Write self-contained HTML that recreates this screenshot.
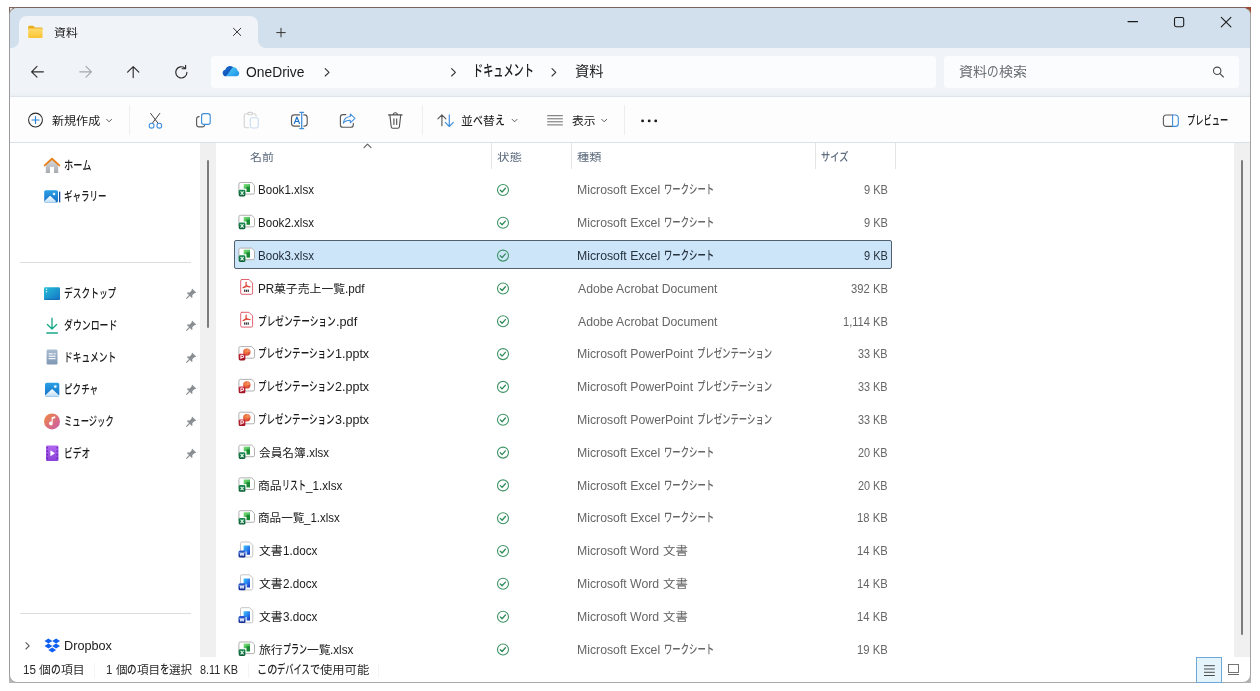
<!DOCTYPE html>
<html lang="ja"><head><meta charset="utf-8"><title>資料</title>
<style>
html,body{margin:0;padding:0;}
body{width:1260px;height:691px;position:relative;overflow:hidden;background:#fff;font-family:"Liberation Sans","Noto Sans CJK JP",sans-serif;}
.t{position:absolute;white-space:pre;will-change:transform;}
.r{display:inline-block;white-space:pre;vertical-align:top;}
.s{display:inline-block;white-space:pre;transform-origin:0 50%;}
.a{position:absolute;}
svg{position:absolute;overflow:visible;}

</style></head><body>
<div class="a" style="left:9px;top:7px;width:9px;height:9px;box-sizing:border-box;background:#efe6e3;border-left:1px solid #7f655e;border-top:1px solid #7f655e;"></div>
<div class="a" style="left:1242px;top:7px;width:9px;height:9px;background:#a24a30;"></div>
<div class="a" style="left:9px;top:674px;width:9px;height:9px;background:#b8b8b8;"></div>
<div class="a" style="left:1242px;top:674px;width:9px;height:9px;background:#b4b4b4;"></div>
<div class="a" style="left:9px;top:7px;width:1242px;height:676px;box-sizing:border-box;border:1px solid #8d8a8a;border-top-color:#7d635c;border-left-color:#9c9a9a;border-right-color:#a3a3a3;border-bottom-color:#a9a9a9;border-radius:8px;background:#ffffff;overflow:hidden;">
  <div class="a" style="left:0;top:0;width:1240px;height:40px;background:#d1e0ec;"></div>
  <div class="a" style="left:0;top:40px;width:1240px;height:48px;background:linear-gradient(#f0f4f9 0,#f0f4f9 44px,#e9eef4 48px);"></div>
  <div class="a" style="left:0;top:88px;width:1240px;height:1px;background:#dfe5eb;"></div>
  <div class="a" style="left:0;top:89px;width:1240px;height:45px;background:#fdfdfe;"></div>
  <div class="a" style="left:0;top:134px;width:1240px;height:1px;background:#d9e0e8;"></div>
</div>
<!-- tab -->
<div class="a" style="left:19px;top:16px;width:239px;height:32px;background:#f0f4f9;border-radius:8px 8px 0 0;"></div>
<div class="a" style="left:11px;top:40px;width:8px;height:8px;background:radial-gradient(circle at 0 0, #d1e0ec 0, #d1e0ec 7.5px, #f0f4f9 8.5px);"></div>
<div class="a" style="left:258px;top:40px;width:8px;height:8px;background:radial-gradient(circle at 100% 0, #d1e0ec 0, #d1e0ec 7.5px, #f0f4f9 8.5px);"></div>
<!-- address + search boxes -->
<div class="a" style="left:211px;top:56px;width:725px;height:32px;background:#fafcfd;border-radius:4px;"></div>
<div class="a" style="left:944px;top:56px;width:295px;height:32px;background:#fafcfd;border-radius:4px;"></div>
<!-- toolbar separators -->
<div class="a" style="left:129px;top:105px;width:1px;height:30px;background:#eceef0;"></div>
<div class="a" style="left:422px;top:105px;width:1px;height:30px;background:#eceef0;"></div>
<div class="a" style="left:624px;top:105px;width:1px;height:30px;background:#eceef0;"></div>
<!-- sidebar splitter band + scrollbars -->
<div class="a" style="left:200px;top:143px;width:16px;height:514px;background:#f0f0f0;"></div>
<div class="a" style="left:206.8px;top:159.5px;width:2.6px;height:168px;background:#7c7c7c;border-radius:1.3px;"></div>
<div class="a" style="left:1234px;top:143px;width:16px;height:514px;background:#f0f0f0;"></div>
<div class="a" style="left:1240.5px;top:159.5px;width:2.6px;height:475px;background:#7c7c7c;border-radius:1.3px;"></div>
<!-- sidebar separators -->
<div class="a" style="left:20px;top:262px;width:171px;height:1px;background:#dedede;"></div>
<div class="a" style="left:20px;top:613px;width:171px;height:1px;background:#dedede;"></div>
<!-- column header separators -->
<div class="a" style="left:491px;top:143px;width:1px;height:25.500px;background:#e4e4e6;"></div>
<div class="a" style="left:571px;top:143px;width:1px;height:25.500px;background:#e4e4e6;"></div>
<div class="a" style="left:815px;top:143px;width:1px;height:25.500px;background:#e4e4e6;"></div>
<div class="a" style="left:895px;top:143px;width:1px;height:25.500px;background:#e4e4e6;"></div>
<!-- selected row -->
<div class="a" style="left:234px;top:240px;width:657.800px;height:28.900px;box-sizing:border-box;background:#cde5f9;border:1.400px solid #53616f;border-radius:2px;"></div>
<!-- status bar separators -->
<div class="a" style="left:94px;top:663px;width:1px;height:15px;background:#f4f4f4;"></div>
<div class="a" style="left:248px;top:663px;width:1px;height:15px;background:#f4f4f4;"></div>
<div class="a" style="left:378px;top:663px;width:1px;height:15px;background:#f4f4f4;"></div>
<!-- view buttons -->
<div class="a" style="left:1196px;top:657px;width:25.500px;height:25.500px;box-sizing:border-box;background:#e5f3fb;border:1.2px solid #6ea8d8;"></div>

<svg width="1260" height="691" viewBox="0 0 1260 691" style="left:0;top:0" fill="none" stroke-linecap="round" stroke-linejoin="round">
<defs>
<linearGradient id="gFold" x1="0" y1="0" x2="0" y2="1"><stop offset="0" stop-color="#ffdc6e"/><stop offset="1" stop-color="#f9c433"/></linearGradient>
<linearGradient id="gCloudL" x1="0" y1="0" x2="1" y2="1"><stop offset="0" stop-color="#1c74d8"/><stop offset="1" stop-color="#0b3fa6"/></linearGradient>
<linearGradient id="gCloudR" x1="0" y1="0" x2="1" y2="1"><stop offset="0" stop-color="#4fd0f7"/><stop offset="1" stop-color="#1e8fe6"/></linearGradient>
</defs>
<!-- tab folder -->
<g id="i-folder">
<path d="M28.2 27.2a1.4 1.4 0 0 1 1.4-1.4h3.6l1.6 1.7h6.4a1.4 1.4 0 0 1 1.4 1.4v1h-14.4z" fill="#e9ac1c"/>
<rect x="28.2" y="28.4" width="14.4" height="9.5" rx="1.2" fill="url(#gFold)"/>
</g>
<!-- tab close, plus -->
<g stroke="#333" stroke-width="1" stroke-linecap="butt">
<path d="M233.200 28l7.800 7.800M241 28l-7.800 7.800"/>
<path d="M276.300 32.600h9.400M281 27.900v9.400"/>
</g>
<!-- window controls -->
<g stroke="#1b1b1b" stroke-width="1.1">
<path d="M1128 21.6h9.6"/>
<rect x="1174.5" y="17.5" width="9.2" height="9.2" rx="1.6"/>
<path d="M1221.3 17.3l9.6 9.6M1230.9 17.3l-9.6 9.6"/>
</g>
<!-- nav arrows -->
<g stroke="#2b2b2b" stroke-width="1.15">
<path d="M43.4 71.8H31.8M37 66.4l-5.4 5.4 5.4 5.4"/>
<path d="M133.2 77.6V66.8M127.6 72.2l5.6-5.6 5.6 5.6"/>
<path d="M186.9 72.4a5.6 5.6 0 1 1-2-4.3M185.6 65.2v3.6h-3.6"/>
</g>
<g stroke="#a3a7ab" stroke-width="1.15">
<path d="M79.8 71.8h11.4M86 66.4l5.4 5.4-5.4 5.4"/>
</g>
<!-- onedrive cloud -->
<g id="i-cloud" stroke="none">
<path d="M226.2 76.3c-2 0-3.6-1.5-3.6-3.4 0-1.700 1.200-3.100 2.900-3.400.5-2.000 2.300-3.400 4.500-3.400 1.700 0 3.200.9 4.000 2.200z" fill="url(#gCloudL)"/>
<path d="M226.200 76.300l6.000-8.600c.6-.3 1.300-.5 2.000-.4 1.900.2 3.300 1.700 3.400 3.500 1 .4 1.600 1.400 1.600 2.500 0 1.700-1.300 3-3 3z" fill="url(#gCloudR)"/>
</g>
<!-- breadcrumb chevrons -->
<g stroke="#333" stroke-width="1.1">
<path d="M325.2 68.600l3.8 3.700-3.800 3.700"/>
<path d="M451.600 68.600l3.800 3.700-3.800 3.700"/>
<path d="M552 68.600l3.800 3.700-3.800 3.700"/>
</g>
<!-- search icon -->
<g stroke="#4a4a4a" stroke-width="1.1">
<circle cx="1217.200" cy="70.800" r="3.700"/><path d="M1220 73.600l3.400 3.400"/>
</g>
<!-- toolbar: new -->
<circle cx="35.500" cy="120" r="6.900" stroke="#2b2b2b" stroke-width="1.050"/>
<path d="M32 120h7M35.500 116.500v7" stroke="#2b86d8" stroke-width="1.200"/>
<g stroke="#5a5a5a" stroke-width="1">
<path d="M106.700 119.400l2.400 2.400 2.400-2.400"/>
<path d="M512.200 119.400l2.400 2.400 2.400-2.400"/>
<path d="M601.800 119.400l2.400 2.400 2.400-2.400"/>
</g>
<!-- cut -->
<g stroke-width="1.100">
<path d="M150.600 113.400l7.800 10.300M159.800 113.400l-7.800 10.300" stroke="#444" stroke-width="1"/>
<circle cx="151.600" cy="125.700" r="2.400" stroke="#3f8edb"/>
<circle cx="159.300" cy="125.700" r="2.400" stroke="#3f8edb"/>
</g>
<!-- copy -->
<g stroke-width="1.150">
<path d="M199.200 116.600h-.4a2.200 2.200 0 0 0-2.200 2.200v5.900a2.200 2.200 0 0 0 2.200 2.200h3.700a2.200 2.200 0 0 0 2.100-1.500" stroke="#5a5a5a"/>
<rect x="201.600" y="113.600" width="8.600" height="10.800" rx="2.200" stroke="#3f8edb"/>
</g>
<!-- paste (disabled) -->
<g stroke-width="1.100">
<path d="M248 113.700h-2a1.800 1.800 0 0 0-1.800 1.800v10.400a1.800 1.800 0 0 0 1.800 1.800h2.600M252.400 113.700h1.900a1.800 1.800 0 0 1 1.800 1.800v.8" stroke="#d2d2d2"/>
<rect x="247.800" y="112.400" width="4.800" height="2.400" rx="1.100" stroke="#d2d2d2"/>
<rect x="250.300" y="117.700" width="8" height="10.300" rx="1.900" stroke="#c9dcf1"/>
</g>
<!-- rename -->
<g stroke-width="1.150">
<path d="M299.600 114.900h-5.300a2.800 2.800 0 0 0-2.800 2.800v5.600a2.800 2.800 0 0 0 2.800 2.800h5.300M303.800 114.900h.600a2.800 2.800 0 0 1 2.800 2.800v5.600a2.800 2.800 0 0 1-2.800 2.800h-.600" stroke="#5a5a5a"/>
<path d="M301.700 112.400v16M299.800 112.300h3.800M299.800 128.500h3.800" stroke="#3f8edb" stroke-width="1.250"/>
<path d="M294.300 123.400l2.600-6.300 2.600 6.300M295.200 121.500h3.500" stroke="#1f74c8" stroke-width="1.200"/>
</g>
<!-- share -->
<g stroke-width="1.150">
<path d="M345.800 114.600h-2.800a2.600 2.600 0 0 0-2.600 2.600v7.500a2.600 2.600 0 0 0 2.600 2.600h7.700a2.600 2.600 0 0 0 2.600-2.600v-1.300" stroke="#5a5a5a"/>
<path d="M350.300 113.900l4.700 4.400-4.700 4.500v-2.500c-3.200-.100-5.400.800-7 3 .4-3.600 2.600-6.400 7-6.800z" stroke="#3f8edb" stroke-width="1.050"/>
</g>
<!-- trash -->
<g stroke="#4f4f4f" stroke-width="1.100">
<path d="M388.500 114.900h13.600M393.300 114.700a2 2 0 0 1 4 0M389.900 115.100l1.300 11.700a1.700 1.700 0 0 0 1.700 1.500h4.800a1.700 1.700 0 0 0 1.700-1.500l1.300-11.700M393.900 118.900v5.600M396.700 118.900v5.600"/>
</g>
<!-- sort -->
<g stroke-width="1.150">
<path d="M441.900 125.700v-10.800M437.900 118.900l4-4.100 4 4.100" stroke="#5a5a5a"/>
<path d="M449.300 114.900v11.400M445.300 122.400l4 4.100 4-4.100" stroke="#3f8edb"/>
</g>
<!-- view lines -->
<g stroke="#6b6b6b" stroke-width="1" stroke-linecap="butt">
<path d="M547.200 115.700h15.600M547.200 118.800h15.600M547.200 121.800h15.600M547.200 124.900h15.600"/>
</g>
<!-- dots -->
<g fill="#1b1b1b" stroke="none">
<circle cx="642.600" cy="120.900" r="1.450"/><circle cx="649.200" cy="120.900" r="1.450"/><circle cx="655.700" cy="120.900" r="1.450"/>
</g>
<!-- preview pane -->
<g stroke-width="1.100">
<path d="M1172.600 115h-6.500a2.700 2.700 0 0 0-2.700 2.700v6a2.700 2.700 0 0 0 2.700 2.700h6.500" stroke="#5a5a5a"/>
<path d="M1172.600 115h3a2.700 2.700 0 0 1 2.700 2.700v6a2.700 2.700 0 0 1-2.700 2.700h-3z" stroke="#3f8edb"/>
</g>
<!-- sort indicator -->
<path d="M364 147.600l3.500-3.500 3.500 3.500" stroke="#5f5f5f" stroke-width="1.100"/>


<!-- ===== sidebar icons ===== -->
<defs>
<linearGradient id="gDesk" x1="0" y1="0" x2="1" y2="1"><stop offset="0" stop-color="#25bfd8"/><stop offset="1" stop-color="#1672c6"/></linearGradient>
<linearGradient id="gPic" x1="0" y1="0" x2="0" y2="1"><stop offset="0" stop-color="#2aa0e6"/><stop offset="1" stop-color="#1670c4"/></linearGradient>
<linearGradient id="gMus" x1="0" y1="0" x2="1" y2="1"><stop offset="0" stop-color="#f08a3c"/><stop offset="1" stop-color="#c95ab0"/></linearGradient>
<linearGradient id="gVid" x1="0" y1="0" x2="0" y2="1"><stop offset="0" stop-color="#b266f0"/><stop offset="1" stop-color="#8a3fd8"/></linearGradient>
<linearGradient id="gDoc" x1="0" y1="0" x2="0" y2="1"><stop offset="0" stop-color="#a9bcd2"/><stop offset="1" stop-color="#7f97b4"/></linearGradient>
<linearGradient id="gHome" x1="0" y1="0" x2="0" y2="1"><stop offset="0" stop-color="#d9dcdf"/><stop offset="1" stop-color="#a7abb0"/></linearGradient>
<linearGradient id="gMnt" x1="0" y1="0" x2="0" y2="1"><stop offset="0" stop-color="#ffffff"/><stop offset="1" stop-color="#bcdcf6"/></linearGradient>
<g id="pin" stroke="none"><path d="M6.300 0.300l3.400 3.400c.3.300.1.700-.3.800l-1.300.2-2 2 .1 2.200c0 .4-.4.600-.7.300L3.600 7.300.5 10.300l-.6-.1-.1-.6L2.800 6.500.9 4.600c-.3-.3-.1-.700.3-.700l2.200.1 2-2 .2-1.300c.1-.4.500-.600.800-.300z" fill="#8b8e92"/></g>
</defs>
<!-- home -->
<g stroke="none">
<path d="M45.800 164.200l6.200-5 6.200 5v8.200a.6.6 0 0 1-.6.600h-11.200a.6.600 0 0 1-.6-.6z" fill="url(#gHome)"/>
<rect x="50" y="166.800" width="4" height="6.200" fill="#fff"/>
<path d="M44.700 165.400l7.300-6.600 7.300 6.600" stroke="#e8801c" stroke-width="1.900" fill="none"/>
</g>
<!-- gallery -->
<g stroke="none">
<rect x="44.200" y="190.200" width="13.800" height="12.400" rx="1.600" fill="url(#gPic)"/>
<path d="M44.200 201.300l5.900-5.500 5.800 5.300v.2a1.300 1.300 0 0 1-1.300 1.300h-9.100a1.300 1.300 0 0 1-1.300-1.300z" fill="url(#gMnt)"/>
<circle cx="54" cy="194" r="1.300" fill="#e6f3fd"/>
<rect x="59" y="191.600" width="1.300" height="11" rx=".5" fill="#1a4f9a"/>
</g>
<!-- desktop -->
<g stroke="none">
<rect x="44" y="287.300" width="16" height="12.600" rx="1.300" fill="url(#gDesk)"/>
<rect x="44" y="298.800" width="16" height="1.100" fill="#0f5fa5" opacity=".55"/>
<circle cx="46.500" cy="289.300" r=".75" fill="#d8f4fb"/><circle cx="46.500" cy="291.700" r=".75" fill="#d8f4fb"/>
</g>
<!-- download -->
<g stroke="#18a88a" stroke-width="1.350">
<path d="M52 318.200v10.600M47.400 324.400l4.600 4.600 4.600-4.600M46.800 333h10.600"/>
</g>
<!-- documents -->
<g stroke="none">
<rect x="46.600" y="349.600" width="10.900" height="15" rx="1.300" fill="url(#gDoc)"/>
<rect x="48.600" y="353.300" width="4.200" height="1.100" fill="#fff"/><rect x="53.800" y="353.300" width="1.800" height="1.100" fill="#fff"/>
<rect x="48.600" y="355.700" width="7" height="1.100" fill="#fff"/><rect x="48.600" y="358.100" width="7" height="1.100" fill="#fff"/>
</g>
<!-- pictures -->
<g stroke="none">
<rect x="45" y="382.800" width="14.300" height="14" rx="1.800" fill="url(#gPic)"/>
<path d="M45 395.400l7.100-6.400 7.200 6.400v0a1.400 1.400 0 0 1-1.400 1.400h-11.500a1.400 1.400 0 0 1-1.400-1.400z" fill="url(#gMnt)"/>
<circle cx="55.300" cy="386.600" r="1.400" fill="#e6f3fd"/>
</g>
<!-- music -->
<g stroke="none">
<circle cx="52" cy="421.400" r="8" fill="url(#gMus)"/>
<path d="M51.600 417.200l3.600-.9v1.900l-2.500.65v4.700a1.850 1.850 0 1 1-1.100-1.700z" fill="#fff"/>
</g>
<!-- video -->
<g stroke="none">
<rect x="46" y="445.600" width="12.500" height="15.400" rx="1.300" fill="url(#gVid)"/>
<g fill="#5b22a8"><rect x="46.700" y="447" width="1.200" height="1.500"/><rect x="46.700" y="450.400" width="1.200" height="1.500"/><rect x="46.700" y="453.900" width="1.200" height="1.500"/><rect x="46.700" y="457.400" width="1.200" height="1.500"/>
<rect x="56.600" y="447" width="1.200" height="1.500"/><rect x="56.600" y="450.400" width="1.200" height="1.500"/><rect x="56.600" y="453.900" width="1.200" height="1.500"/><rect x="56.600" y="457.400" width="1.200" height="1.500"/></g>
<path d="M50.400 450.300l4.600 3-4.600 3z" fill="#fff"/>
</g>
<!-- pins -->
<use href="#pin" x="186.200" y="288.600"/><use href="#pin" x="186.200" y="320.600"/><use href="#pin" x="186.200" y="352.600"/>
<use href="#pin" x="186.200" y="384.600"/><use href="#pin" x="186.200" y="416.600"/><use href="#pin" x="186.200" y="448.600"/>
<!-- dropbox -->
<path d="M25.900 642.600l3.300 3.200-3.300 3.200" stroke="#5a5a5a" stroke-width="1.100"/>
<g fill="#0f5ff0" stroke="none">
<path d="M48.400 638.600l3.900 2.500-3.900 2.500-3.900-2.500z"/><path d="M56.100 638.600l3.900 2.500-3.900 2.500-3.900-2.500z"/>
<path d="M48.400 643.600l3.900 2.500-3.900 2.500-3.900-2.500z"/><path d="M56.100 643.600l3.900 2.500-3.900 2.500-3.900-2.500z"/>
<path d="M52.250 647.600l3.900 2.500-3.900 2.500-3.900-2.500z"/>
</g>

<!-- ===== file icons ===== -->
<defs>
<linearGradient id="gXl" x1="0" y1="0" x2="1" y2="1"><stop offset="0" stop-color="#7fe07a"/><stop offset="1" stop-color="#2fa84a"/></linearGradient>
<linearGradient id="gXb" x1="0" y1="0" x2="0" y2="1"><stop offset="0" stop-color="#1a8a52"/><stop offset="1" stop-color="#0d5a34"/></linearGradient>
<radialGradient id="gPp" cx=".4" cy=".35" r=".75"><stop offset="0" stop-color="#f58a4a"/><stop offset="1" stop-color="#d2382a"/></radialGradient>
<linearGradient id="gPb" x1="0" y1="0" x2="0" y2="1"><stop offset="0" stop-color="#c92a3c"/><stop offset="1" stop-color="#9c1424"/></linearGradient>
<linearGradient id="gWd" x1="0" y1="0" x2="1" y2="1"><stop offset="0" stop-color="#3cc4f8"/><stop offset=".55" stop-color="#2a7cf0"/><stop offset="1" stop-color="#1530b8"/></linearGradient>
<linearGradient id="gWb" x1="0" y1="0" x2="0" y2="1"><stop offset="0" stop-color="#2a5fd8"/><stop offset="1" stop-color="#14298c"/></linearGradient>
<g id="fx" stroke-linecap="butt">
<path d="M2.400 2.200h11.300l2.800 2.800v7.300a1.500 1.500 0 0 1-1.500 1.500h-12.600a1.500 1.500 0 0 1-1.500-1.500v-8.600a1.500 1.500 0 0 1 1.500-1.500z" fill="#fff" stroke="#adadad" stroke-width=".95"/>
<rect x="5.700" y="3.800" width="6.300" height="4.600" fill="url(#gXl)" stroke="none"/>
<rect x="8.500" y="6.500" width="3.500" height="5.200" fill="#1b8a34" stroke="none"/>
<rect x=".700" y="9.400" width="6.700" height="6.700" rx="1.400" fill="url(#gXb)" stroke="none"/>
<path d="M2.600 11.100l3 3.400M5.600 11.100l-3 3.400" stroke="#d9f7e6" stroke-width="1.150"/>
</g>
<g id="fp" stroke-linecap="butt">
<path d="M2.400 2.200h11.300l2.800 2.800v7.300a1.500 1.500 0 0 1-1.500 1.500h-12.600a1.500 1.500 0 0 1-1.500-1.500v-8.600a1.500 1.500 0 0 1 1.500-1.500z" fill="#fff" stroke="#adadad" stroke-width=".95"/>
<circle cx="8.800" cy="7.700" r="3.700" fill="url(#gPp)" stroke="none"/>
<path d="M8.800 7.700v-3.700a3.700 3.700 0 0 1 3.700 3.700z" fill="#f7a878" opacity=".55" stroke="none"/>
<rect x=".700" y="9.400" width="6.700" height="6.700" rx="1.400" fill="url(#gPb)" stroke="none"/>
<path d="M2.900 14.700v-3.900h1.500a1.200 1.200 0 0 1 0 2.400h-1.500" stroke="#ffe9ec" stroke-width="1.050" fill="none"/>
</g>
<g id="fd">
<path d="M4 .700h7l3.600 3.600v9.900a1.300 1.300 0 0 1-1.300 1.300h-9.300a1.300 1.300 0 0 1-1.300-1.300v-12.200a1.300 1.300 0 0 1 1.300-1.300z" fill="#fff" stroke="#e0596a" stroke-width=".95"/>
<path d="M8.200 3.500c-.5 1.700-.1 2.500.2 3.300M8.400 6.600c-.8 1.300-2 2.100-3.300 2.300M8.500 6.700c.9 1 2.100 1.400 3.400 1.200" stroke="#e0483a" stroke-width="1.250" fill="none"/>
<path d="M5.200 8.900c1.900-1.100 4.500-1.500 6.700-1" stroke="#e0483a" stroke-width="1" fill="none"/>
<rect x="6" y="10.800" width="1.300" height="2.300" fill="#3a3a3a" stroke="none"/><rect x="7.800" y="10.800" width="1.400" height="2.300" fill="#3a3a3a" stroke="none"/><rect x="9.700" y="10.800" width="1.200" height="2.300" fill="#3a3a3a" stroke="none"/>
</g>
<g id="fw" stroke-linecap="butt">
<path d="M3.900 .700h7.600l3.300 3.300v10.400a1.400 1.400 0 0 1-1.400 1.400h-9.500a1.400 1.400 0 0 1-1.400-1.400v-12.300a1.400 1.400 0 0 1 1.400-1.400z" fill="#fff" stroke="#bdbdbd" stroke-width=".9"/>
<path d="M5.600 4.300h6.400v9.100h-3.400v-3.300h-3z" fill="url(#gWd)" stroke="none"/>
<rect x=".500" y="9.100" width="7" height="7" rx="1.500" fill="url(#gWb)" stroke="none"/>
<path d="M2 11l.9 3.400 1.100-3 1.100 3 .9-3.400" stroke="#eef2ff" stroke-width="1" fill="none"/>
</g>
<g id="ok">
<circle cx="0" cy="0" r="5.500" stroke="#3d9464" stroke-width="1.100" fill="none"/>
<path d="M-2.700.200l1.800 1.800 3.300-3.700" stroke="#2f8a58" stroke-width="1.300" fill="none"/>
</g>
</defs>
<use href="#fx" x="238" y="180.3"/><use href="#ok" x="503" y="190.0"/>
<use href="#fx" x="238" y="213.1"/><use href="#ok" x="503" y="222.8"/>
<use href="#fx" x="238" y="245.9"/><use href="#ok" x="503" y="255.6"/>
<use href="#fd" x="238" y="278.8"/><use href="#ok" x="503" y="288.5"/>
<use href="#fd" x="238" y="311.6"/><use href="#ok" x="503" y="321.3"/>
<use href="#fp" x="238" y="344.4"/><use href="#ok" x="503" y="354.1"/>
<use href="#fp" x="238" y="377.2"/><use href="#ok" x="503" y="386.9"/>
<use href="#fp" x="238" y="410.0"/><use href="#ok" x="503" y="419.7"/>
<use href="#fx" x="238" y="442.9"/><use href="#ok" x="503" y="452.6"/>
<use href="#fx" x="238" y="475.7"/><use href="#ok" x="503" y="485.4"/>
<use href="#fx" x="238" y="508.5"/><use href="#ok" x="503" y="518.2"/>
<use href="#fw" x="238" y="541.3"/><use href="#ok" x="503" y="551.0"/>
<use href="#fw" x="238" y="574.1"/><use href="#ok" x="503" y="583.8"/>
<use href="#fw" x="238" y="607.0"/><use href="#ok" x="503" y="616.7"/>
<use href="#fx" x="238" y="639.8"/><use href="#ok" x="503" y="649.5"/>
<!-- status bar view buttons -->
<g stroke="#4a4a4a" stroke-width="1" stroke-linecap="butt">
<path d="M1204 665.700h10.800M1204 669h10.800M1204 672.300h10.800M1204 675.500h10.800"/>
<rect x="1228.500" y="664.500" width="10" height="8" fill="none" stroke-linejoin="miter" stroke="#666" stroke-width=".9"/>
<path d="M1228 674.500h11" stroke="#6a6a6a"/>
</g>
</svg>

<div class="t" style="top:22.8px;font-size:12.5px;line-height:20px;color:#1b1b1b;left:53.97px;"><span class="r" style="font-size:11.62px;width:23.82px"><span class="s" style="transform:scaleX(1.0258)">資料</span></span></div>
<div class="t" style="top:61.0px;font-size:14px;line-height:22px;color:#1b1b1b;left:246.09px;"><span class="r" style="width:58.46px"><span class="s" style="transform:scaleX(0.9884)">OneDrive</span></span></div>
<div class="t" style="top:58.3px;font-size:15.8px;line-height:25px;color:#1b1b1b;left:473.04px;"><span class="r" style="font-size:15.64px;font-weight:500;width:60.91px"><span class="s" style="transform:scaleX(0.6497)">ドキュメント</span></span></div>
<div class="t" style="top:58.8px;font-size:15.1px;line-height:24px;color:#1b1b1b;left:575.07px;"><span class="r" style="font-size:14.04px;width:28.71px"><span class="s" style="transform:scaleX(1.0229)">資料</span></span></div>
<div class="t" style="top:61.3px;font-size:13.5px;line-height:22px;color:#686d72;font-weight:400;left:959.09px;"><span class="r" style="font-size:12.56px;width:28.09px"><span class="s" style="transform:scaleX(1.1192)">資料</span></span><span class="r" style="font-size:13.09px;width:11.67px"><span class="s" style="transform:scaleX(0.8911)">の</span></span><span class="r" style="font-size:12.56px;width:28.09px"><span class="s" style="transform:scaleX(1.1192)">検索</span></span></div>
<div class="t" style="top:111.0px;font-size:12.5px;line-height:20px;color:#1b1b1b;left:52.18px;"><span class="r" style="font-size:11.62px;width:48.18px"><span class="s" style="transform:scaleX(1.0376)">新規作成</span></span></div>
<div class="t" style="top:111.0px;font-size:12.5px;line-height:20px;color:#1b1b1b;left:461.33px;"><span class="r" style="font-size:11.62px;width:11.91px"><span class="s" style="transform:scaleX(1.0256)">並</span></span><span class="r" style="font-size:12.12px;font-weight:500;width:9.89px"><span class="s" style="transform:scaleX(0.8165)">べ</span></span><span class="r" style="font-size:11.62px;width:11.91px"><span class="s" style="transform:scaleX(1.0256)">替</span></span><span class="r" style="font-size:12.12px;font-weight:500;width:9.89px"><span class="s" style="transform:scaleX(0.8165)">え</span></span></div>
<div class="t" style="top:111.0px;font-size:12.5px;line-height:20px;color:#1b1b1b;left:571.89px;"><span class="r" style="font-size:11.62px;width:23.59px"><span class="s" style="transform:scaleX(1.0161)">表示</span></span></div>
<div class="t" style="top:111.0px;font-size:12.5px;line-height:20px;color:#1b1b1b;left:1186.70px;"><span class="r" style="font-size:12.38px;font-weight:500;width:41.27px"><span class="s" style="transform:scaleX(0.6668)">プレビュー</span></span></div>
<div class="t" style="top:156.0px;font-size:12.5px;line-height:20px;color:#1b1b1b;left:63.84px;"><span class="r" style="font-size:12.38px;font-weight:500;width:27.42px"><span class="s" style="transform:scaleX(0.7458)">ホーム</span></span></div>
<div class="t" style="top:187.0px;font-size:12.5px;line-height:20px;color:#1b1b1b;left:64.03px;"><span class="r" style="font-size:12.38px;font-weight:500;width:42.36px"><span class="s" style="transform:scaleX(0.6845)">ギャラリー</span></span></div>
<div class="t" style="top:283.5px;font-size:12.5px;line-height:20px;color:#1b1b1b;left:64.00px;"><span class="r" style="font-size:12.38px;font-weight:500;width:52.33px"><span class="s" style="transform:scaleX(0.7046)">デスクトップ</span></span></div>
<div class="t" style="top:315.5px;font-size:12.5px;line-height:20px;color:#1b1b1b;left:64.17px;"><span class="r" style="font-size:12.38px;font-weight:500;width:53.32px"><span class="s" style="transform:scaleX(0.7179)">ダウンロード</span></span></div>
<div class="t" style="top:347.5px;font-size:12.5px;line-height:20px;color:#1b1b1b;left:64.10px;"><span class="r" style="font-size:12.38px;font-weight:500;width:52.24px"><span class="s" style="transform:scaleX(0.7034)">ドキュメント</span></span></div>
<div class="t" style="top:379.5px;font-size:12.5px;line-height:20px;color:#1b1b1b;left:63.76px;"><span class="r" style="font-size:12.38px;font-weight:500;width:34.19px"><span class="s" style="transform:scaleX(0.6922)">ピクチャ</span></span></div>
<div class="t" style="top:411.5px;font-size:12.5px;line-height:20px;color:#1b1b1b;left:64.40px;"><span class="r" style="font-size:12.38px;font-weight:500;width:49.76px"><span class="s" style="transform:scaleX(0.6723)">ミュージック</span></span></div>
<div class="t" style="top:443.5px;font-size:12.5px;line-height:20px;color:#1b1b1b;left:64.01px;"><span class="r" style="font-size:12.38px;font-weight:500;width:26.40px"><span class="s" style="transform:scaleX(0.7108)">ビデオ</span></span></div>
<div class="t" style="top:635.5px;font-size:12.5px;line-height:20px;color:#1b1b1b;left:64.20px;"><span class="r" style="width:47.94px"><span class="s" style="transform:scaleX(1.0145)">Dropbox</span></span></div>
<div class="t" style="top:147.9px;font-size:11.6px;line-height:19px;color:#5d6b7e;left:250.01px;"><span class="r" style="font-size:10.79px;width:23.88px"><span class="s" style="transform:scaleX(1.1068)">名前</span></span></div>
<div class="t" style="top:147.9px;font-size:11.6px;line-height:19px;color:#5d6b7e;left:497.10px;"><span class="r" style="font-size:10.79px;width:24.94px"><span class="s" style="transform:scaleX(1.1559)">状態</span></span></div>
<div class="t" style="top:147.9px;font-size:11.6px;line-height:19px;color:#5d6b7e;left:577.49px;"><span class="r" style="font-size:10.79px;width:24.32px"><span class="s" style="transform:scaleX(1.1272)">種類</span></span></div>
<div class="t" style="top:147.9px;font-size:11.6px;line-height:19px;color:#5d6b7e;left:821.43px;"><span class="r" style="font-size:11.48px;font-weight:500;width:27.34px"><span class="s" style="transform:scaleX(0.8027)">サイズ</span></span></div>
<div class="t" style="top:180.2px;font-size:12.5px;line-height:20px;color:#1b1b1b;left:258.08px;"><span class="r" style="width:56.03px"><span class="s" style="transform:scaleX(0.9269)">Book1.xlsx</span></span></div>
<div class="t" style="top:180.2px;font-size:12.5px;line-height:20px;color:#666666;left:577.20px;"><span class="r" style="width:86.56px"><span class="s" style="transform:scaleX(0.9811)">Microsoft Excel </span></span><span class="r" style="font-size:12.38px;font-weight:500;width:50.12px"><span class="s" style="transform:scaleX(0.6749)">ワークシート</span></span></div>
<div class="t" style="top:180.2px;font-size:12.5px;line-height:20px;color:#666666;right:372.59px;"><span class="r" style="width:23.87px"><span class="s" style="transform:scaleX(0.8807)">9 KB</span></span></div>
<div class="t" style="top:213.0px;font-size:12.5px;line-height:20px;color:#1b1b1b;left:258.08px;"><span class="r" style="width:56.03px"><span class="s" style="transform:scaleX(0.9269)">Book2.xlsx</span></span></div>
<div class="t" style="top:213.0px;font-size:12.5px;line-height:20px;color:#666666;left:577.20px;"><span class="r" style="width:86.56px"><span class="s" style="transform:scaleX(0.9811)">Microsoft Excel </span></span><span class="r" style="font-size:12.38px;font-weight:500;width:50.12px"><span class="s" style="transform:scaleX(0.6749)">ワークシート</span></span></div>
<div class="t" style="top:213.0px;font-size:12.5px;line-height:20px;color:#666666;right:372.59px;"><span class="r" style="width:23.87px"><span class="s" style="transform:scaleX(0.8807)">9 KB</span></span></div>
<div class="t" style="top:245.8px;font-size:12.5px;line-height:20px;color:#1f2a36;left:258.08px;"><span class="r" style="width:56.03px"><span class="s" style="transform:scaleX(0.9269)">Book3.xlsx</span></span></div>
<div class="t" style="top:245.8px;font-size:12.5px;line-height:20px;color:#26323e;left:577.20px;"><span class="r" style="width:86.56px"><span class="s" style="transform:scaleX(0.9811)">Microsoft Excel </span></span><span class="r" style="font-size:12.38px;font-weight:500;width:50.12px"><span class="s" style="transform:scaleX(0.6749)">ワークシート</span></span></div>
<div class="t" style="top:245.8px;font-size:12.5px;line-height:20px;color:#26323e;right:372.59px;"><span class="r" style="width:23.87px"><span class="s" style="transform:scaleX(0.8807)">9 KB</span></span></div>
<div class="t" style="top:278.7px;font-size:12.5px;line-height:20px;color:#1b1b1b;left:258.08px;"><span class="r" style="width:16.28px"><span class="s" style="transform:scaleX(0.9368)">PR</span></span><span class="r" style="font-size:11.62px;width:71.12px"><span class="s" style="transform:scaleX(1.0211)">菓子売上一覧</span></span><span class="r" style="width:19.54px"><span class="s" style="transform:scaleX(0.9368)">.pdf</span></span></div>
<div class="t" style="top:278.7px;font-size:12.5px;line-height:20px;color:#666666;left:577.52px;"><span class="r" style="width:139.45px"><span class="s" style="transform:scaleX(0.9789)">Adobe Acrobat Document</span></span></div>
<div class="t" style="top:278.7px;font-size:12.5px;line-height:20px;color:#666666;right:372.06px;"><span class="r" style="width:36.89px"><span class="s" style="transform:scaleX(0.8994)">392 KB</span></span></div>
<div class="t" style="top:311.5px;font-size:12.5px;line-height:20px;color:#1b1b1b;left:258.08px;"><span class="r" style="font-size:12.38px;font-weight:500;width:77.61px"><span class="s" style="transform:scaleX(0.6983)">プレゼンテーション</span></span><span class="r" style="width:21.18px"><span class="s" style="transform:scaleX(1.0153)">.pdf</span></span></div>
<div class="t" style="top:311.5px;font-size:12.5px;line-height:20px;color:#666666;left:577.52px;"><span class="r" style="width:139.45px"><span class="s" style="transform:scaleX(0.9789)">Adobe Acrobat Document</span></span></div>
<div class="t" style="top:311.5px;font-size:12.5px;line-height:20px;color:#666666;right:372.40px;"><span class="r" style="width:44.87px"><span class="s" style="transform:scaleX(0.8882)">1,114 KB</span></span></div>
<div class="t" style="top:344.3px;font-size:12.5px;line-height:20px;color:#1b1b1b;left:257.92px;"><span class="r" style="font-size:12.38px;font-weight:500;width:76.60px"><span class="s" style="transform:scaleX(0.6892)">プレゼンテーション</span></span><span class="r" style="width:34.13px"><span class="s" style="transform:scaleX(1.0020)">1.pptx</span></span></div>
<div class="t" style="top:344.3px;font-size:12.5px;line-height:20px;color:#666666;left:577.20px;"><span class="r" style="width:119.51px"><span class="s" style="transform:scaleX(0.9830)">Microsoft PowerPoint </span></span><span class="r" style="font-size:12.38px;font-weight:500;width:75.14px"><span class="s" style="transform:scaleX(0.6761)">プレゼンテーション</span></span></div>
<div class="t" style="top:344.3px;font-size:12.5px;line-height:20px;color:#666666;right:372.80px;"><span class="r" style="width:29.60px"><span class="s" style="transform:scaleX(0.8690)">33 KB</span></span></div>
<div class="t" style="top:377.1px;font-size:12.5px;line-height:20px;color:#1b1b1b;left:257.92px;"><span class="r" style="font-size:12.38px;font-weight:500;width:76.60px"><span class="s" style="transform:scaleX(0.6892)">プレゼンテーション</span></span><span class="r" style="width:34.13px"><span class="s" style="transform:scaleX(1.0020)">2.pptx</span></span></div>
<div class="t" style="top:377.1px;font-size:12.5px;line-height:20px;color:#666666;left:577.20px;"><span class="r" style="width:119.51px"><span class="s" style="transform:scaleX(0.9830)">Microsoft PowerPoint </span></span><span class="r" style="font-size:12.38px;font-weight:500;width:75.14px"><span class="s" style="transform:scaleX(0.6761)">プレゼンテーション</span></span></div>
<div class="t" style="top:377.1px;font-size:12.5px;line-height:20px;color:#666666;right:372.80px;"><span class="r" style="width:29.60px"><span class="s" style="transform:scaleX(0.8690)">33 KB</span></span></div>
<div class="t" style="top:409.9px;font-size:12.5px;line-height:20px;color:#1b1b1b;left:257.92px;"><span class="r" style="font-size:12.38px;font-weight:500;width:76.60px"><span class="s" style="transform:scaleX(0.6892)">プレゼンテーション</span></span><span class="r" style="width:34.13px"><span class="s" style="transform:scaleX(1.0020)">3.pptx</span></span></div>
<div class="t" style="top:409.9px;font-size:12.5px;line-height:20px;color:#666666;left:577.20px;"><span class="r" style="width:119.51px"><span class="s" style="transform:scaleX(0.9830)">Microsoft PowerPoint </span></span><span class="r" style="font-size:12.38px;font-weight:500;width:75.14px"><span class="s" style="transform:scaleX(0.6761)">プレゼンテーション</span></span></div>
<div class="t" style="top:409.9px;font-size:12.5px;line-height:20px;color:#666666;right:372.80px;"><span class="r" style="width:29.60px"><span class="s" style="transform:scaleX(0.8690)">33 KB</span></span></div>
<div class="t" style="top:442.8px;font-size:12.5px;line-height:20px;color:#1b1b1b;left:259.20px;"><span class="r" style="font-size:11.62px;width:46.52px"><span class="s" style="transform:scaleX(1.0018)">会員名簿</span></span><span class="r" style="width:22.98px"><span class="s" style="transform:scaleX(0.9191)">.xlsx</span></span></div>
<div class="t" style="top:442.8px;font-size:12.5px;line-height:20px;color:#666666;left:577.20px;"><span class="r" style="width:86.56px"><span class="s" style="transform:scaleX(0.9811)">Microsoft Excel </span></span><span class="r" style="font-size:12.38px;font-weight:500;width:50.12px"><span class="s" style="transform:scaleX(0.6749)">ワークシート</span></span></div>
<div class="t" style="top:442.8px;font-size:12.5px;line-height:20px;color:#666666;right:372.80px;"><span class="r" style="width:29.60px"><span class="s" style="transform:scaleX(0.8690)">20 KB</span></span></div>
<div class="t" style="top:475.6px;font-size:12.5px;line-height:20px;color:#1b1b1b;left:258.42px;"><span class="r" style="font-size:11.62px;width:23.66px"><span class="s" style="transform:scaleX(1.0190)">商品</span></span><span class="r" style="font-size:12.38px;font-weight:500;width:23.88px"><span class="s" style="transform:scaleX(0.6431)">リスト</span></span><span class="r" style="width:36.37px"><span class="s" style="transform:scaleX(0.9349)">_1.xlsx</span></span></div>
<div class="t" style="top:475.6px;font-size:12.5px;line-height:20px;color:#666666;left:577.20px;"><span class="r" style="width:86.56px"><span class="s" style="transform:scaleX(0.9811)">Microsoft Excel </span></span><span class="r" style="font-size:12.38px;font-weight:500;width:50.12px"><span class="s" style="transform:scaleX(0.6749)">ワークシート</span></span></div>
<div class="t" style="top:475.6px;font-size:12.5px;line-height:20px;color:#666666;right:372.80px;"><span class="r" style="width:29.60px"><span class="s" style="transform:scaleX(0.8690)">20 KB</span></span></div>
<div class="t" style="top:508.4px;font-size:12.5px;line-height:20px;color:#1b1b1b;left:257.76px;"><span class="r" style="font-size:11.62px;width:46.44px"><span class="s" style="transform:scaleX(1.0001)">商品一覧</span></span><span class="r" style="width:35.70px"><span class="s" style="transform:scaleX(0.9175)">_1.xlsx</span></span></div>
<div class="t" style="top:508.4px;font-size:12.5px;line-height:20px;color:#666666;left:577.20px;"><span class="r" style="width:86.56px"><span class="s" style="transform:scaleX(0.9811)">Microsoft Excel </span></span><span class="r" style="font-size:12.38px;font-weight:500;width:50.12px"><span class="s" style="transform:scaleX(0.6749)">ワークシート</span></span></div>
<div class="t" style="top:508.4px;font-size:12.5px;line-height:20px;color:#666666;right:372.30px;"><span class="r" style="width:30.64px"><span class="s" style="transform:scaleX(0.8994)">18 KB</span></span></div>
<div class="t" style="top:541.2px;font-size:12.5px;line-height:20px;color:#1b1b1b;left:259.20px;"><span class="r" style="font-size:11.62px;width:23.62px"><span class="s" style="transform:scaleX(1.0172)">文書</span></span><span class="r" style="width:34.38px"><span class="s" style="transform:scaleX(0.9332)">1.docx</span></span></div>
<div class="t" style="top:541.2px;font-size:12.5px;line-height:20px;color:#666666;left:577.20px;"><span class="r" style="width:85.58px"><span class="s" style="transform:scaleX(0.9804)">Microsoft Word </span></span><span class="r" style="font-size:11.62px;width:24.81px"><span class="s" style="transform:scaleX(1.0686)">文書</span></span></div>
<div class="t" style="top:541.2px;font-size:12.5px;line-height:20px;color:#666666;right:372.30px;"><span class="r" style="width:30.64px"><span class="s" style="transform:scaleX(0.8994)">14 KB</span></span></div>
<div class="t" style="top:574.0px;font-size:12.5px;line-height:20px;color:#1b1b1b;left:259.20px;"><span class="r" style="font-size:11.62px;width:23.62px"><span class="s" style="transform:scaleX(1.0172)">文書</span></span><span class="r" style="width:34.38px"><span class="s" style="transform:scaleX(0.9332)">2.docx</span></span></div>
<div class="t" style="top:574.0px;font-size:12.5px;line-height:20px;color:#666666;left:577.20px;"><span class="r" style="width:85.58px"><span class="s" style="transform:scaleX(0.9804)">Microsoft Word </span></span><span class="r" style="font-size:11.62px;width:24.81px"><span class="s" style="transform:scaleX(1.0686)">文書</span></span></div>
<div class="t" style="top:574.0px;font-size:12.5px;line-height:20px;color:#666666;right:372.30px;"><span class="r" style="width:30.64px"><span class="s" style="transform:scaleX(0.8994)">14 KB</span></span></div>
<div class="t" style="top:606.9px;font-size:12.5px;line-height:20px;color:#1b1b1b;left:259.20px;"><span class="r" style="font-size:11.62px;width:23.62px"><span class="s" style="transform:scaleX(1.0172)">文書</span></span><span class="r" style="width:34.38px"><span class="s" style="transform:scaleX(0.9332)">3.docx</span></span></div>
<div class="t" style="top:606.9px;font-size:12.5px;line-height:20px;color:#666666;left:577.20px;"><span class="r" style="width:85.58px"><span class="s" style="transform:scaleX(0.9804)">Microsoft Word </span></span><span class="r" style="font-size:11.62px;width:24.81px"><span class="s" style="transform:scaleX(1.0686)">文書</span></span></div>
<div class="t" style="top:606.9px;font-size:12.5px;line-height:20px;color:#666666;right:372.30px;"><span class="r" style="width:30.64px"><span class="s" style="transform:scaleX(0.8994)">14 KB</span></span></div>
<div class="t" style="top:639.7px;font-size:12.5px;line-height:20px;color:#1b1b1b;left:258.97px;"><span class="r" style="font-size:11.62px;width:23.71px"><span class="s" style="transform:scaleX(1.0213)">旅行</span></span><span class="r" style="font-size:12.38px;font-weight:500;width:23.94px"><span class="s" style="transform:scaleX(0.6445)">プラン</span></span><span class="r" style="font-size:11.62px;width:23.71px"><span class="s" style="transform:scaleX(1.0213)">一覧</span></span><span class="r" style="width:23.43px"><span class="s" style="transform:scaleX(0.9371)">.xlsx</span></span></div>
<div class="t" style="top:639.7px;font-size:12.5px;line-height:20px;color:#666666;left:577.20px;"><span class="r" style="width:86.56px"><span class="s" style="transform:scaleX(0.9811)">Microsoft Excel </span></span><span class="r" style="font-size:12.38px;font-weight:500;width:50.12px"><span class="s" style="transform:scaleX(0.6749)">ワークシート</span></span></div>
<div class="t" style="top:639.7px;font-size:12.5px;line-height:20px;color:#666666;right:372.30px;"><span class="r" style="width:30.64px"><span class="s" style="transform:scaleX(0.8994)">19 KB</span></span></div>
<div class="t" style="top:660.0px;font-size:12.5px;line-height:20px;color:#2a2a2a;left:23.30px;"><span class="r" style="width:16.23px"><span class="s" style="transform:scaleX(0.9332)">15 </span></span><span class="r" style="font-size:11.62px;width:11.81px"><span class="s" style="transform:scaleX(1.0171)">個</span></span><span class="r" style="font-size:12.12px;font-weight:500;width:9.81px"><span class="s" style="transform:scaleX(0.8097)">の</span></span><span class="r" style="font-size:11.62px;width:23.62px"><span class="s" style="transform:scaleX(1.0171)">項目</span></span></div>
<div class="t" style="top:660.0px;font-size:12.5px;line-height:20px;color:#2a2a2a;left:105.54px;"><span class="r" style="width:9.55px"><span class="s" style="transform:scaleX(0.9145)">1 </span></span><span class="r" style="font-size:11.62px;width:11.57px"><span class="s" style="transform:scaleX(0.9968)">個</span></span><span class="r" style="font-size:12.12px;font-weight:500;width:9.61px"><span class="s" style="transform:scaleX(0.7936)">の</span></span><span class="r" style="font-size:11.62px;width:23.14px"><span class="s" style="transform:scaleX(0.9968)">項目</span></span><span class="r" style="font-size:12.12px;font-weight:500;width:9.61px"><span class="s" style="transform:scaleX(0.7936)">を</span></span><span class="r" style="font-size:11.62px;width:23.14px"><span class="s" style="transform:scaleX(0.9968)">選択</span></span></div>
<div class="t" style="top:660.0px;font-size:12.5px;line-height:20px;color:#2a2a2a;left:200.00px;"><span class="r" style="width:38.00px"><span class="s" style="transform:scaleX(0.8723)">8.11 KB</span></span></div>
<div class="t" style="top:660.0px;font-size:12.5px;line-height:20px;color:#2a2a2a;left:257.32px;"><span class="r" style="font-size:12.12px;font-weight:500;width:20.43px"><span class="s" style="transform:scaleX(0.8434)">この</span></span><span class="r" style="font-size:12.38px;font-weight:500;width:32.85px"><span class="s" style="transform:scaleX(0.6685)">デバイス</span></span><span class="r" style="font-size:12.12px;font-weight:500;width:10.21px"><span class="s" style="transform:scaleX(0.8434)">で</span></span><span class="r" style="font-size:11.62px;width:49.19px"><span class="s" style="transform:scaleX(1.0594)">使用可能</span></span></div>
</body></html>
